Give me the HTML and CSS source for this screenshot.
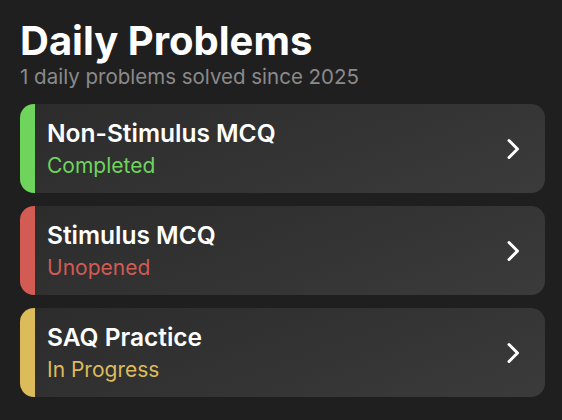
FILE: index.html
```html
<!DOCTYPE html>
<html>
<head>
<meta charset="utf-8">
<link rel="stylesheet" href="styles.css">
</head>
<body>
<main class="page">
  <header class="header">
    <h1 class="title">Daily Problems</h1>
    <p class="subtitle">1 daily problems solved since 2025</p>
  </header>
  <ul class="list">
    <li class="card card--green">
      <div class="card-text">
        <span class="card-title">Non-Stimulus MCQ</span>
        <span class="card-status">Completed</span>
      </div>
      <svg class="chev" viewBox="0 0 16 24" width="16" height="24"><path d="M4 3.5 L12.5 12 L4 20.5" fill="none" stroke="#fff" stroke-width="3" stroke-linecap="round" stroke-linejoin="round"/></svg>
    </li>
    <li class="card card--red">
      <div class="card-text">
        <span class="card-title">Stimulus MCQ</span>
        <span class="card-status">Unopened</span>
      </div>
      <svg class="chev" viewBox="0 0 16 24" width="16" height="24"><path d="M4 3.5 L12.5 12 L4 20.5" fill="none" stroke="#fff" stroke-width="3" stroke-linecap="round" stroke-linejoin="round"/></svg>
    </li>
    <li class="card card--yellow">
      <div class="card-text">
        <span class="card-title">SAQ Practice</span>
        <span class="card-status">In Progress</span>
      </div>
      <svg class="chev" viewBox="0 0 16 24" width="16" height="24"><path d="M4 3.5 L12.5 12 L4 20.5" fill="none" stroke="#fff" stroke-width="3" stroke-linecap="round" stroke-linejoin="round"/></svg>
    </li>
  </ul>
</main>
</body>
</html>
```
FILE: styles.css
```css
html, body {
  margin: 0;
  padding: 0;
  background: #1f1f1f;
}
body {
  font-family: Inter, "Noto Sans", sans-serif;
  color: #fff;
  width: 562px;
  height: 420px;
  overflow: hidden;
}
.page {
  padding: 18px 17px 0 20px;
}
.header {
  margin-bottom: 15px;
}
.title {
  margin: 0;
  font-size: 40px;
  font-weight: 700;
  line-height: 46px;
  letter-spacing: 0;
}
.subtitle {
  margin: 1px 0 0;
  font-size: 20.5px;
  line-height: 24px;
  color: #8a8a8a;
}
.list {
  list-style: none;
  margin: 0;
  padding: 0;
  display: flex;
  flex-direction: column;
  gap: 13px;
}
.card {
  height: 89px;
  border-radius: 14px;
  background: linear-gradient(160deg, #2c2c2c 0%, #333 50%, #3b3b3b 100%);
  border-left: 15px solid;
  display: flex;
  align-items: center;
  padding: 0 24px 0 12px;
  box-sizing: border-box;
}
.card--green { border-left-color: #6ed45c; }
.card--green .card-status { color: #6ed45c; }
.card--red { border-left-color: #d25b54; }
.card--red .card-status { color: #d25b54; }
.card--yellow { border-left-color: #dcbb5a; }
.card--yellow .card-status { color: #dcbb5a; }
.card-text {
  flex: 1;
  display: flex;
  flex-direction: column;
  gap: 6px;
}
.card-title {
  font-size: 24.5px;
  font-weight: 600;
  line-height: 28px;
}
.card-status {
  font-size: 21px;
  line-height: 26px;
}
.chev {
  display: block;
}
```
